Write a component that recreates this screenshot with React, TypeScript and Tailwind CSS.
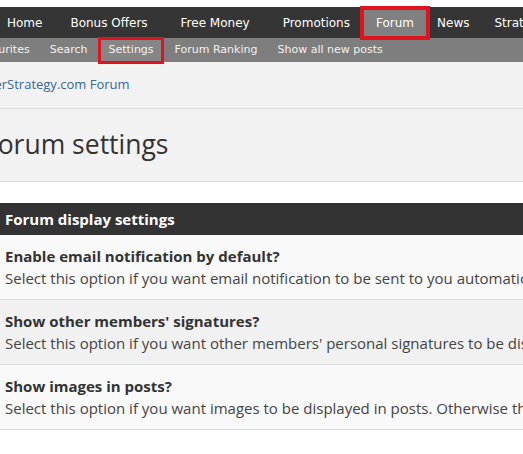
import React from 'react'

// gap before each main nav label, in px
const mainNav = [
  { label: 'Home', gap: 'ml-[7px]' },
  { label: 'Bonus Offers', gap: 'ml-[28px]' },
  { label: 'Free Money', gap: 'ml-[33px]' },
  { label: 'Promotions', gap: 'ml-[33px]' },
  { label: 'Forum', gap: 'ml-[14px]', active: true },
  { label: 'News', gap: 'ml-[11px]' },
  { label: 'Strategy', gap: 'ml-[25px]' },
]
const subNav = ['Favourites', 'Search', 'Settings', 'Forum Ranking', 'Show all new posts']

const options = [
  {
    title: 'Enable email notification by default?',
    text: 'Select this option if you want email notification to be sent to you automatically when you post.',
  },
  {
    title: "Show other members' signatures?",
    text: "Select this option if you want other members' personal signatures to be displayed in posts.",
  },
  {
    title: 'Show images in posts?',
    text: 'Select this option if you want images to be displayed in posts. Otherwise they are shown as links.',
  },
]

export default function App() {
  return (
    <div className="w-[523px] h-[454px] overflow-hidden bg-white">
      <div className="h-[7px] bg-white" />

      {/* Main navigation */}
      <nav className="h-[31px] bg-[#353535] flex items-center whitespace-nowrap font-['DejaVu_Sans',sans-serif] text-[12px] text-white">
        {mainNav.map(item =>
          item.active ? (
            <span
              key={item.label}
              className={`${item.gap} h-[26px] flex items-center px-[12px] bg-[#808080] outline-[4px] outline-[#e0141e] outline-solid`}
            >
              {item.label}
            </span>
          ) : (
            <span key={item.label} className={item.gap}>{item.label}</span>
          )
        )}
      </nav>

      {/* Forum sub navigation */}
      <nav className="h-[24px] bg-[#7e7e7e] flex items-center whitespace-nowrap -ml-[37px] font-['DejaVu_Sans',sans-serif] text-[11px] text-[#f2f2f2]">
        {subNav.map(item =>
          item === 'Settings' ? (
            <span key={item} className="mx-[4px] h-[21px] flex items-center px-[7px] outline-[3px] outline-[#e0141e] outline-solid bg-[#868686]">
              {item}
            </span>
          ) : (
            <span key={item} className="px-[10px]">{item}</span>
          )
        )}
      </nav>

      <div className="bg-[#f2f2f2] font-['Open_Sans',sans-serif] whitespace-nowrap">
        <div className="h-[47px] border-b border-[#dcdcdc] flex items-center -ml-[28px] text-[13px] text-[#3a6896]">
          PokerStrategy.com Forum
        </div>
        <div className="h-[73px] border-b border-[#dcdcdc] flex items-center -ml-[16px] text-[26.5px] text-[#333]">
          Forum settings
        </div>
      </div>

      <div className="pt-[21px] font-['Open_Sans',sans-serif] whitespace-nowrap">
        <div className="h-[32px] bg-[#333] text-white font-bold text-[15px] flex items-center pl-[5px]">
          Forum display settings
        </div>
        {options.map((o, i) => (
          <div
            key={o.title}
            className={`h-[65px] border-b border-[#dcdcdc] pl-[5px] pt-[10px] ${i === 1 ? 'bg-[#f1f1f1]' : 'bg-[#f9f9f9]'}`}
          >
            <div className="h-[22px] text-[15px] font-bold text-[#333] leading-[22px]">{o.title}</div>
            <div className="h-[22px] text-[15px] text-[#444] leading-[22px]">{o.text}</div>
          </div>
        ))}
      </div>
    </div>
  )
}
